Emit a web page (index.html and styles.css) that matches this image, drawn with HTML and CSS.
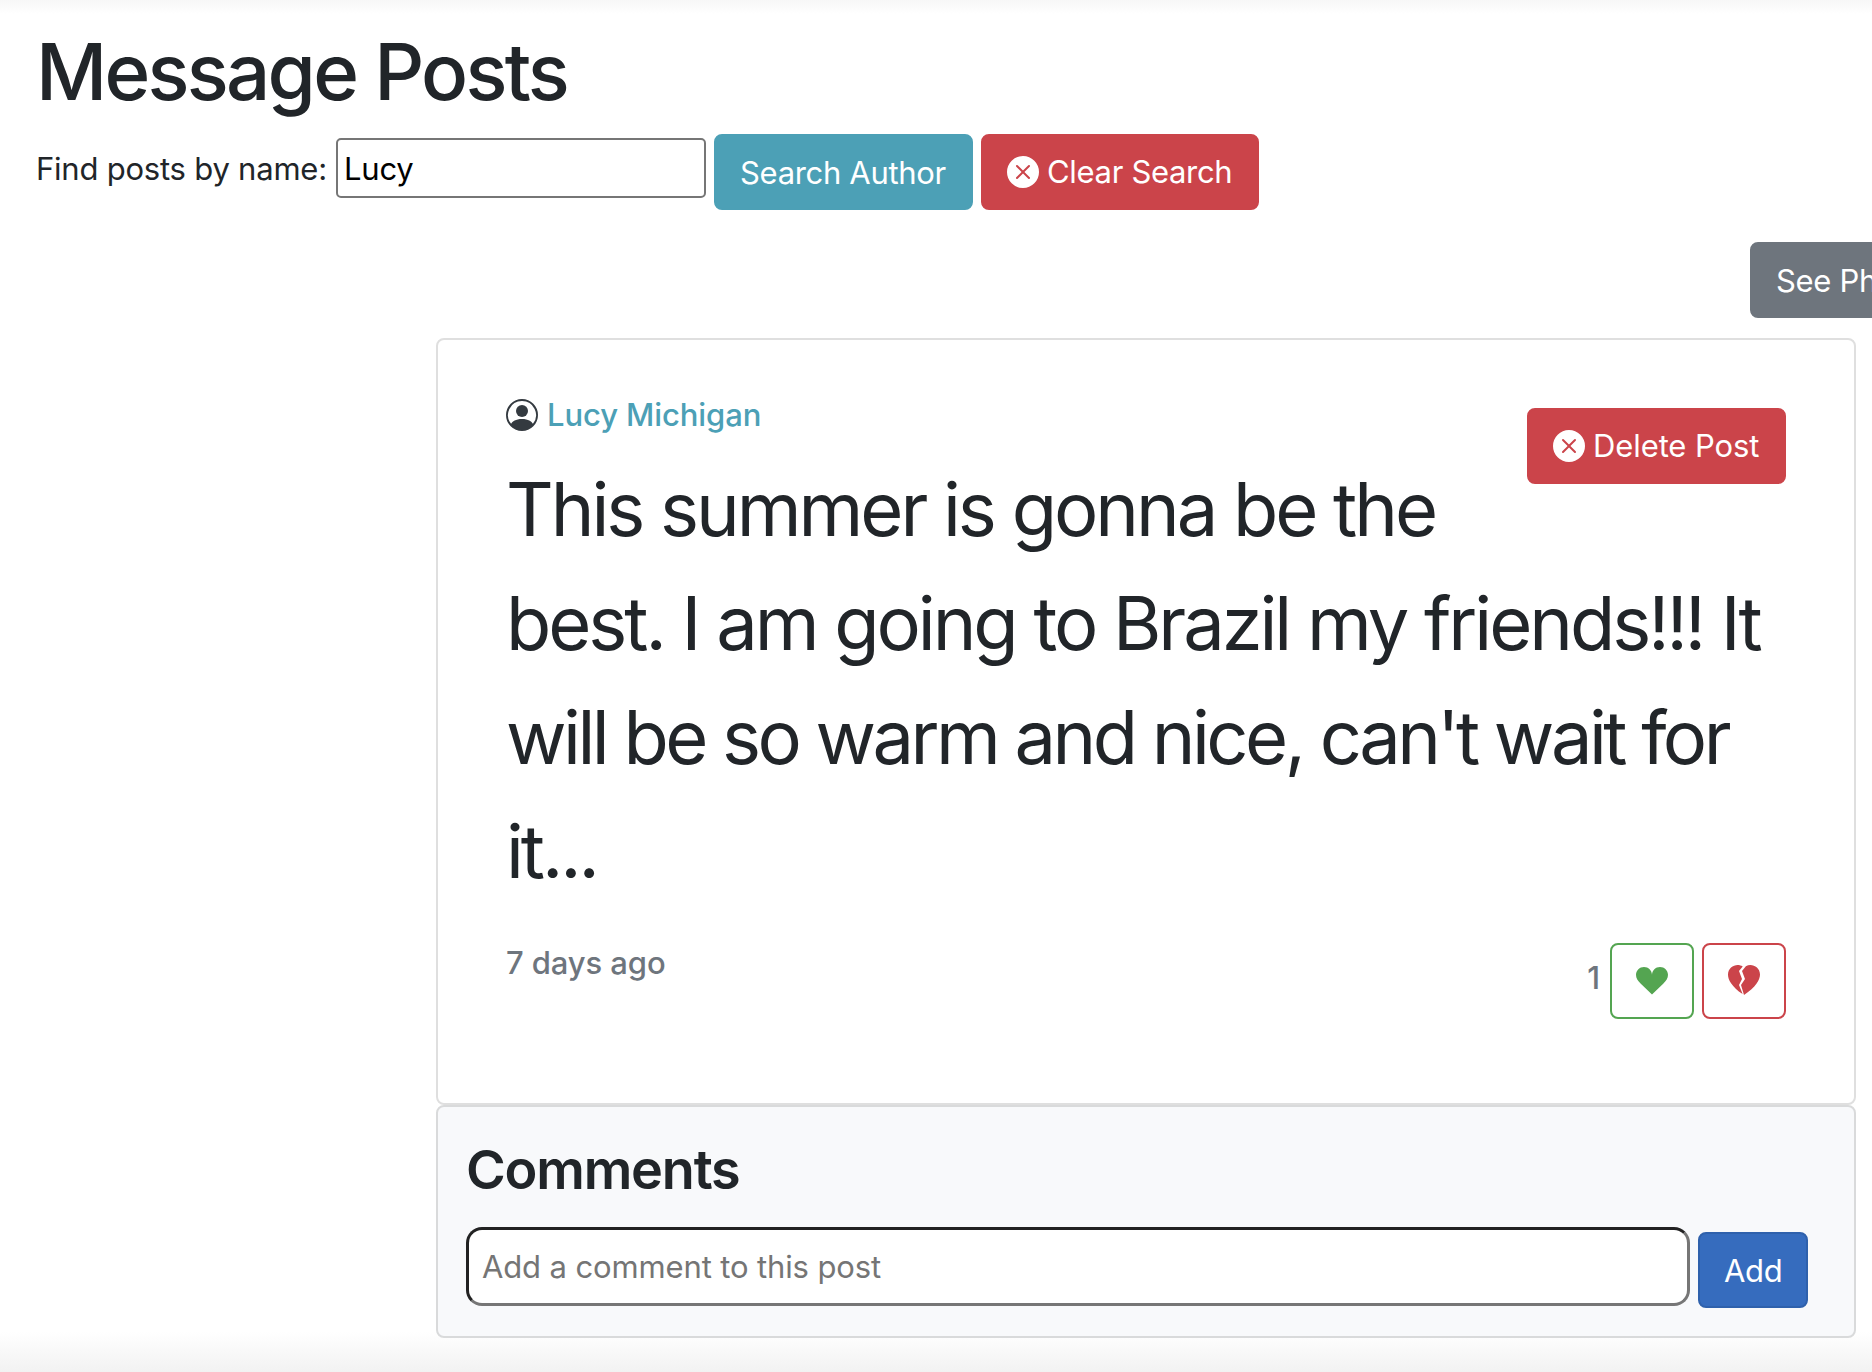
FILE: index.html
```html
<!DOCTYPE html>
<html lang="en">
<head>
<meta charset="utf-8">
<title>Message Posts</title>
<link rel="stylesheet" href="styles.css">
</head>
<body>
<svg class="sprite" aria-hidden="true">
  <symbol id="x-circle" viewBox="0 0 16 16"><path d="M16 8A8 8 0 1 1 0 8a8 8 0 0 1 16 0zM5.354 4.646a.5.5 0 1 0-.708.708L7.293 8l-2.647 2.646a.5.5 0 0 0 .708.708L8 8.707l2.646 2.647a.5.5 0 0 0 .708-.708L8.707 8l2.647-2.646a.5.5 0 0 0-.708-.708L8 7.293 5.354 4.646z"/></symbol>
</svg>
<header class="page-header">
  <h1 class="page-title">Message Posts</h1>
  <form class="search">
    <label class="search-label" for="author">Find posts by name:</label>
    <input class="search-input" id="author" type="text" value="Lucy">
    <button class="btn btn-info" type="button">Search Author</button>
    <button class="btn btn-danger btn-clear" type="button"><svg class="icon"><use href="#x-circle"/></svg>Clear Search</button>
  </form>
</header>
<div class="toolbar"><button class="btn btn-secondary" type="button">See Ph</button></div>
<main class="feed">
  <article class="post">
    <button class="btn btn-danger btn-delete" type="button"><svg class="icon"><use href="#x-circle"/></svg>Delete Post</button>
    <div class="author">
      <svg class="icon" viewBox="0 0 16 16"><path d="M11 6a3 3 0 1 1-6 0 3 3 0 0 1 6 0z"/><path fill-rule="evenodd" d="M0 8a8 8 0 1 1 16 0A8 8 0 0 1 0 8zm8-7a7 7 0 0 0-5.468 11.37C3.242 11.226 4.805 10 8 10s4.757 1.225 5.468 2.37A7 7 0 0 0 8 1z"/></svg>
      <a class="author-name">Lucy Michigan</a>
    </div>
    <p class="message">This summer is gonna be the<br>best. I am going to Brazil my friends!!! It<br><span class="tight">will be so warm and nice, can't wait for</span><br>it...</p>
    <footer class="post-footer">
      <span class="age">7 days ago</span>
      <div class="votes">
        <span class="count">1</span>
        <button class="vote vote-up" type="button" aria-label="Like"><svg class="icon" viewBox="0 0 16 16"><path d="M4 1c2.200 0 4 1.700 4 3.900C8 2.700 9.800 1 12 1s4 1.700 4 3.900c0 1.900-.9 3-2.400 4.500L8 14.800 2.400 9.400C.9 7.900 0 6.800 0 4.900 0 2.700 1.800 1 4 1z"/></svg></button>
        <button class="vote vote-down" type="button" aria-label="Dislike"><svg class="icon" viewBox="0 0 16 16"><path d="M8.931.586 7 3l1.500 4-2 3L8 15C22.534 5.396 13.757-2.210 8.931.586ZM7.358.770 5.500 3 7 7l-1.500 3 1.815 4.537C-6.533 4.960 2.685-2.467 7.358.770Z"/></svg></button>
      </div>
    </footer>
  </article>
  <section class="comments">
    <h2 class="comments-title">Comments</h2>
    <form class="comment-form">
      <input class="comment-input" type="text" placeholder="Add a comment to this post">
      <button class="btn btn-primary" type="button">Add</button>
    </form>
  </section>
</main>
</body>
</html>
```
FILE: styles.css
```css
* { box-sizing: border-box; }
html { background: #fff; }
body {
  margin: 0;
  width: 1872px;
  height: 1372px;
  overflow: hidden;
  font-family: Inter, "Liberation Sans", sans-serif;
  font-size: 31px;
  font-weight: 430;
  line-height: 48px;
  letter-spacing: -0.22px;
  color: #212529;
  background:
    linear-gradient(#f7f7f7, #fff) top / 100% 14px no-repeat,
    linear-gradient(#fff, #f2f2f2) bottom / 100% 40px no-repeat,
    #fff;
}
h1, h2, p { margin: 0; }
button, input { font: inherit; letter-spacing: inherit; margin: 0; }
.sprite { display: none; }
.icon { width: 32px; height: 32px; fill: currentColor; flex: none; display: block; }

.page-header { padding: 24px 36px 0; }
.page-title { font-size: 78px; font-weight: 530; line-height: 96px; letter-spacing: -2.75px; }
.search { display: flex; align-items: flex-start; gap: 8px; margin-top: 14px; }
.search-label { width: 292px; padding-top: 11px; white-space: nowrap; }
.search-input {
  width: 370px;
  height: 60px;
  margin-top: 4px;
  padding: 1px 6px 0;
  border: 2px solid #767676;
  border-radius: 5px;
  color: #000;
  background: #fff;
}

.btn {
  display: flex;
  align-items: center;
  gap: 8px;
  flex: none;
  height: 76px;
  padding: 1px 24px 0;
  border: 2px solid transparent;
  border-radius: 8px;
  color: #fff;
  letter-spacing: -0.32px;
  white-space: nowrap;
}
.btn-info { width: 259px; background: #4ca0b6; border-color: #4ca0b6; }
.btn-danger { padding-top: 0; background: #cb444a; border-color: #cb444a; }
.btn-clear { width: 278px; }
.btn-secondary { width: 122px; padding-right: 0; border-radius: 8px 0 0 8px; background: #6e757d; border-color: #6e757d; }
.btn-primary { width: 110px; background: #366cbe; border-color: #2f61ac; }

.toolbar { display: flex; justify-content: flex-end; padding: 32px 0 20px; }
.feed { width: 1420px; margin-left: 436px; }
.post {
  height: 767px;
  padding: 51px 68px 0;
  border: 2px solid #dfdfdf;
  border-radius: 8px;
  background: #fff;
}
.btn-delete { float: right; width: 259px; margin-top: 17px; letter-spacing: -0.1px; }
.author { display: flex; align-items: center; gap: 9px; height: 48px; color: #343a40; }
.author-name { color: #4ca0b6; font-weight: 540; letter-spacing: -0.1px; }
.message {
  margin-top: 13px;
  font-size: 74px;
  font-weight: 430;
  line-height: 114px;
  letter-spacing: -3.05px;
  white-space: nowrap;
}
.message .tight { letter-spacing: -3.55px; }
.post-footer {
  display: flex;
  justify-content: space-between;
  margin-top: 35px;
  color: #6e757d;
  font-weight: 550;
  letter-spacing: -0.1px;
}
.age { margin-top: -4px; }
.votes { display: flex; gap: 8px; }
.count { padding: 11px 2px 0 0; }
.vote {
  display: flex;
  align-items: center;
  justify-content: center;
  width: 84px;
  height: 76px;
  padding: 0;
  border: 2px solid;
  border-radius: 8px;
  background: #fff;
}
.vote-up { color: #54a551; }
.vote-down { color: #cb444a; }

.comments {
  height: 233px;
  padding: 29px 28px 0;
  border: 2px solid #d9dadb;
  border-radius: 8px;
  background: #f8f9fb;
}
.comments-title { font-size: 54px; font-weight: 600; line-height: 68px; letter-spacing: -1.2px; }
.comment-form { display: flex; gap: 8px; margin-top: 23px; }
.comment-input {
  width: 1224px;
  height: 79px;
  padding: 0 13px;
  border: 3px solid;
  border-color: #222 #767676 #767676 #222;
  border-radius: 16px;
  background: #fff;
  letter-spacing: -0.13px;
}
.comment-input::placeholder { color: #757575; }
.comment-form .btn { margin-top: 5px; }
```
